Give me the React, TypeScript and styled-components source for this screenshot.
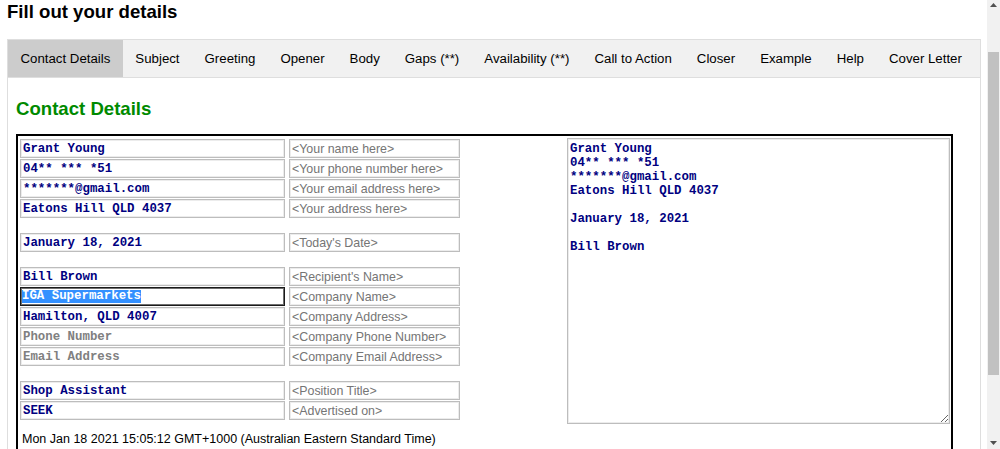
import React from 'react';
import styled, { createGlobalStyle } from 'styled-components';

const GlobalStyle = createGlobalStyle`
  html, body { margin: 0; padding: 0; background: #fff; }
  body { font-family: "Liberation Sans", Arial, sans-serif; overflow: hidden; }
  * { box-sizing: border-box; }
`;

const Page = styled.div`
  display: flex;
  width: 1000px;
  height: 449px;
  overflow: hidden;
`;

const Main = styled.main`
  flex: 1;
  min-width: 0;
  padding: 1px 6px 0 7px;
`;

const Title = styled.h1`
  margin: 0 0 17px;
  font-size: 18.6px;
  line-height: 21px;
  font-weight: bold;
  color: #000;
`;

const TabBar = styled.nav`
  display: flex;
  height: 39px;
  background: #f1f1f1;
  border: 1px solid #dedede;
  overflow: hidden;
`;

const Tab = styled.button<{ $active?: boolean }>`
  flex-shrink: 0;
  height: 100%;
  padding: 0 12.5px;
  border: none;
  margin: 0;
  background: ${(p) => (p.$active ? '#cccccc' : 'transparent')};
  font-family: "Liberation Sans", Arial, sans-serif;
  font-size: 13.25px;
  color: #000;
  white-space: nowrap;
  cursor: pointer;
`;

const TabContent = styled.section`
  border: 1px solid #dedede;
  border-top: none;
  padding: 20px 0 0 8px;
  height: 420px;
`;

const SectionHeading = styled.h2`
  margin: 0 0 15px;
  font-size: 18.6px;
  line-height: 21px;
  font-weight: bold;
  color: #008a00;
`;

const Box = styled.div`
  width: 937px;
  border: 2px solid #000;
  padding: 2px 1px 30px 2px;
`;

const TopRow = styled.div`
  display: flex;
  justify-content: space-between;
  align-items: flex-start;
`;

const FieldGrid = styled.div`
  display: grid;
  grid-template-columns: 265px 171px;
  column-gap: 4px;
  row-gap: 1px;
  margin-top: 1px;
`;

const Spacer = styled.div`
  grid-column: 1 / -1;
  height: 13px;
`;

const mono = `"Liberation Mono", "Courier New", monospace`;

const ValueInput = styled.input<{ $muted?: boolean }>`
  width: 100%;
  height: 19px;
  margin: 0;
  border: 1px solid #bdbdbd;
  box-shadow: inset 0 0 0 1px #ececec;
  padding: 0 2px;
  background: #fff;
  font-family: ${mono};
  font-weight: bold;
  font-size: 12.4px;
  color: ${(p) => (p.$muted ? '#808080' : '#000080')};
  outline: none;
`;

const HintInput = styled.input`
  width: 100%;
  height: 19px;
  margin: 0;
  border: 1px solid #bdbdbd;
  box-shadow: inset 0 0 0 1px #ececec;
  padding: 0 2px;
  background: #fff;
  font-family: "Liberation Sans", Arial, sans-serif;
  font-size: 12.4px;
  color: #000;
  outline: none;
  &::placeholder { color: #757575; opacity: 1; }
`;

const FocusedField = styled.div`
  height: 19px;
  border: 1px solid #1a1a1a;
  box-shadow: inset 0 0 0 1px #6e6e6e;
  padding: 0 1px;
  display: flex;
  align-items: center;
  background: #fff;
  font-family: ${mono};
  font-weight: bold;
  font-size: 12.4px;
  color: #000080;
  white-space: pre;
`;

const Selection = styled.span`
  background: #3390ff;
  color: #fff;
  line-height: 13px;
`;

const Preview = styled.textarea`
  width: 383px;
  height: 286px;
  margin: 0;
  border: 1px solid #bdbdbd;
  box-shadow: inset 0 0 0 1px #ececec;
  padding: 3px 2px;
  font-family: ${mono};
  font-weight: bold;
  font-size: 12.4px;
  line-height: 14px;
  color: #000080;
  background: #fff;
  outline: none;
`;

const DateLine = styled.div`
  margin: 8px 0 0 2px;
  font-size: 12.5px;
  line-height: 14px;
  color: #000;
`;

const Scrollbar = styled.div`
  width: 13px;
  height: 449px;
  background: #f1f1f1;
  display: flex;
  flex-direction: column;
  align-items: center;
`;

const ArrowBox = styled.div<{ $h: number }>`
  height: ${(p) => p.$h}px;
  width: 100%;
  display: flex;
  align-items: center;
  justify-content: center;
  flex-shrink: 0;
`;

const Thumb = styled.div`
  width: 11px;
  height: 323px;
  margin-top: 42px;
  background: #c1c1c1;
`;

const Grow = styled.div`
  flex: 1;
`;

const tabs = [
  'Contact Details',
  'Subject',
  'Greeting',
  'Opener',
  'Body',
  'Gaps (**)',
  'Availability (**)',
  'Call to Action',
  'Closer',
  'Example',
  'Help',
  'Cover Letter',
];

type Row =
  | { kind: 'field'; value?: string; muted?: boolean; hint: string; focused?: boolean }
  | { kind: 'gap' };

const rows: Row[] = [
  { kind: 'field', value: 'Grant Young', hint: '<Your name here>' },
  { kind: 'field', value: '04** *** *51', hint: '<Your phone number here>' },
  { kind: 'field', value: '*******@gmail.com', hint: '<Your email address here>' },
  { kind: 'field', value: 'Eatons Hill QLD 4037', hint: '<Your address here>' },
  { kind: 'gap' },
  { kind: 'field', value: 'January 18, 2021', hint: "<Today's Date>" },
  { kind: 'gap' },
  { kind: 'field', value: 'Bill Brown', hint: "<Recipient's Name>" },
  { kind: 'field', value: 'IGA Supermarkets', hint: '<Company Name>', focused: true },
  { kind: 'field', value: 'Hamilton, QLD 4007', hint: '<Company Address>' },
  { kind: 'field', value: 'Phone Number', muted: true, hint: '<Company Phone Number>' },
  { kind: 'field', value: 'Email Address', muted: true, hint: '<Company Email Address>' },
  { kind: 'gap' },
  { kind: 'field', value: 'Shop Assistant', hint: '<Position Title>' },
  { kind: 'field', value: 'SEEK', hint: '<Advertised on>' },
];

const previewText = [
  'Grant Young',
  '04** *** *51',
  '*******@gmail.com',
  'Eatons Hill QLD 4037',
  '',
  'January 18, 2021',
  '',
  'Bill Brown',
].join('\n');

const Triangle = ({ up }: { up?: boolean }) => (
  <svg width="7" height="4" viewBox="0 0 7 4">
    <polygon points={up ? '0,4 7,4 3.5,0' : '0,0 7,0 3.5,4'} fill="#505050" />
  </svg>
);

export default function App() {
  return (
    <>
      <GlobalStyle />
      <Page>
        <Main>
          <Title>Fill out your details</Title>
          <TabBar>
            {tabs.map((t, i) => (
              <Tab key={t} $active={i === 0}>
                {t}
              </Tab>
            ))}
          </TabBar>
          <TabContent>
            <SectionHeading>Contact Details</SectionHeading>
            <Box>
              <TopRow>
                <FieldGrid>
                  {rows.map((r, i) =>
                    r.kind === 'gap' ? (
                      <Spacer key={i} />
                    ) : (
                      <React.Fragment key={i}>
                        {r.focused ? (
                          <FocusedField role="textbox">
                            <Selection>{r.value}</Selection>
                          </FocusedField>
                        ) : (
                          <ValueInput readOnly value={r.value} $muted={r.muted} />
                        )}
                        <HintInput readOnly placeholder={r.hint} />
                      </React.Fragment>
                    )
                  )}
                </FieldGrid>
                <Preview readOnly value={previewText} />
              </TopRow>
              <DateLine>Mon Jan 18 2021 15:05:12 GMT+1000 (Australian Eastern Standard Time)</DateLine>
            </Box>
          </TabContent>
        </Main>
        <Scrollbar>
          <ArrowBox $h={10}>
            <Triangle up />
          </ArrowBox>
          <Thumb />
          <Grow />
          <ArrowBox $h={13}>
            <Triangle />
          </ArrowBox>
        </Scrollbar>
      </Page>
    </>
  );
}
